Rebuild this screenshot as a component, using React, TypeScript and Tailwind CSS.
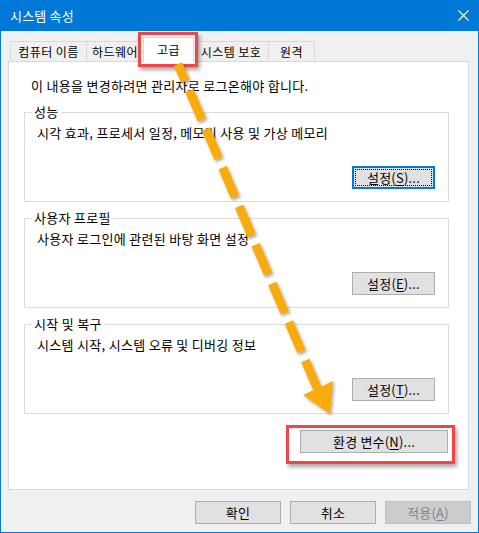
import React from "react";

const font = { fontFamily: '"Noto Sans CJK KR", "Noto Sans", sans-serif' };

function Accel({ label, k }: { label: string; k: string }) {
  return (
    <>
      {label}(<span className="underline underline-offset-2">{k}</span>)
    </>
  );
}

function WinButton({
  children,
  width,
  isDefault,
  disabled,
}: {
  children: React.ReactNode;
  width: string;
  isDefault?: boolean;
  disabled?: boolean;
}) {
  if (isDefault) {
    return (
      <div className={`${width} h-[23px] border-2 border-[#0078d7] bg-[#e1e1e1] p-px`}>
        <div className="w-full h-full border border-dotted border-black flex items-center justify-center text-[13px] tracking-[0.2px] leading-none text-black">
          {children}
        </div>
      </div>
    );
  }
  return (
    <div
      className={`${width} h-[23px] border flex items-center justify-center text-[13px] tracking-[0.2px] leading-none ${
        disabled ? "bg-[#cccccc] border-[#bfbfbf] text-[#838383]" : "bg-[#e1e1e1] border-[#adadad] text-black"
      }`}
    >
      {children}
    </div>
  );
}

function Group({
  title,
  desc,
  btn,
  mt,
  isDefault,
}: {
  title: string;
  desc: string;
  btn: React.ReactNode;
  mt: string;
  isDefault?: boolean;
}) {
  return (
    <div className={`relative ${mt} ml-[15px] w-[425px] h-[90px] border border-[#dcdcdc] flex flex-col`}>
      <span className="absolute -top-[9px] left-[7px] bg-white px-[2px] text-[13px] tracking-[0.3px] leading-[16px] text-black">
        {title}
      </span>
      <div className="pt-[12px] pl-[12px] text-[13px] tracking-[0.3px] leading-[16px] text-black">{desc}</div>
      <div className="mt-auto flex justify-end pr-[13px] pb-[12px]">
        <WinButton width="w-[83px]" isDefault={isDefault}>
          {btn}
        </WinButton>
      </div>
    </div>
  );
}

const tabs = [
  { name: "컴퓨터 이름", w: "w-[77px]" },
  { name: "하드웨어", w: "w-[58px]" },
  { name: "고급", w: "w-[51px]", active: true },
  { name: "시스템 보호", w: "w-[76px]" },
  { name: "원격", w: "w-[47px]" },
];

export default function App() {
  return (
    <div className="relative w-[479px] h-[533px] bg-[#0078d7] flex flex-col overflow-hidden" style={font}>
      {/* Title bar */}
      <div className="h-[31px] flex items-center justify-between pl-[10px] pr-[10px] text-white">
        <span className="text-[13px] tracking-[0.2px] leading-none">시스템 속성</span>
        <svg width="11" height="11" viewBox="0 0 11 11">
          <path d="M0.5 0.5 L10.5 10.5 M10.5 0.5 L0.5 10.5" stroke="white" strokeWidth="1.1" />
        </svg>
      </div>

      {/* Body */}
      <div className="flex-1 mx-px mb-px bg-[#f0f0f0] pl-[7px] flex flex-col">
        {/* Tabs */}
        <div className="h-[30px] flex items-end pl-[2px]">
          {tabs.map((t) =>
            t.active ? (
              <div
                key={t.name}
                className={`${t.w} h-[25px] -mb-px -ml-px relative z-10 bg-white border border-b-0 border-[#d9d9d9] flex items-center justify-center text-[12px] tracking-[0.4px] text-black`}
              >
                {t.name}
              </div>
            ) : (
              <div
                key={t.name}
                className={`${t.w} h-[20px] -ml-px first:ml-0 border border-b-0 border-[#d9d9d9] flex items-center justify-center text-[12px] tracking-[0.4px] text-black`}
              >
                {t.name}
              </div>
            )
          )}
        </div>

        {/* Panel */}
        <div className="w-[461px] h-[429px] bg-white border border-[#d9d9d9] flex flex-col">
          <div className="pt-[16px] pl-[22px] text-[13px] tracking-[0.3px] leading-[16px] text-black">
            이 내용을 변경하려면 관리자로 로그온해야 합니다.
          </div>
          <Group
            title="성능"
            desc="시각 효과, 프로세서 일정, 메모리 사용 및 가상 메모리"
            btn={<><Accel label="설정" k="S" />...</>}
            mt="mt-[18px]"
            isDefault
          />
          <Group
            title="사용자 프로필"
            desc="사용자 로그인에 관련된 바탕 화면 설정"
            btn={<><Accel label="설정" k="E" />...</>}
            mt="mt-[16px]"
          />
          <Group
            title="시작 및 복구"
            desc="시스템 시작, 시스템 오류 및 디버깅 정보"
            btn={<><Accel label="설정" k="T" />...</>}
            mt="mt-[16px]"
          />
          <div className="mt-[16px] ml-[15px] w-[424px] flex justify-end">
            <WinButton width="w-[148px]">
              <span className="whitespace-pre">
                <Accel label="환경 변수" k="N" />...
              </span>
            </WinButton>
          </div>
        </div>

        {/* Dialog buttons */}
        <div className="mt-[11px] flex justify-end gap-[9px] pr-[7px]">
          <WinButton width="w-[86px]">확인</WinButton>
          <WinButton width="w-[86px]">취소</WinButton>
          <WinButton width="w-[86px]" disabled>
            <Accel label="적용" k="A" />
          </WinButton>
        </div>
      </div>

      {/* Annotation overlays */}
      <div className="absolute left-[138px] top-[32px] w-[60px] h-[35px] border-[3px] border-[#ef4648] shadow-[2px_3px_4px_rgba(0,0,0,0.35)] pointer-events-none" />
      <div className="absolute left-[286px] top-[425px] w-[169px] h-[39px] border-[3px] border-[#ef4648] shadow-[2px_3px_4px_rgba(0,0,0,0.35)] pointer-events-none" />
      <svg className="absolute left-0 top-0 pointer-events-none" width="479" height="533" viewBox="0 0 479 533">
        <defs>
          <filter id="sh" x="-20%" y="-20%" width="140%" height="140%">
            <feDropShadow dx="1.5" dy="2" stdDeviation="1.5" floodColor="#000" floodOpacity="0.35" />
          </filter>
        </defs>
        <g filter="url(#sh)">
          <line x1="318" y1="390" x2="178" y2="64" stroke="#f8ab0b" strokeWidth="9" strokeDasharray="32 10" />
          <polygon points="303,395 333,381 330,414" fill="#f8ab0b" />
        </g>
      </svg>
    </div>
  );
}
